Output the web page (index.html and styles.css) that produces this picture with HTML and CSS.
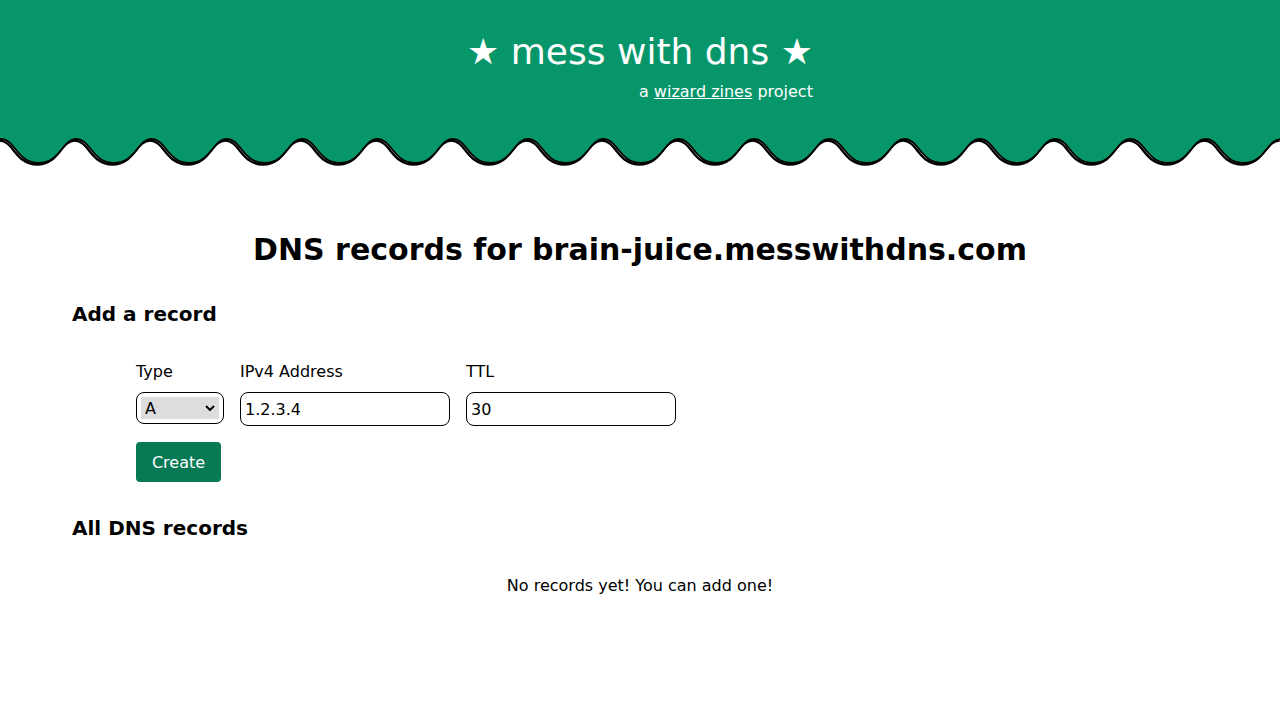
FILE: index.html
```html
<!DOCTYPE html>
<html lang="en">
<head>
<meta charset="utf-8">
<title>mess with dns</title>
<link rel="stylesheet" href="styles.css">
</head>
<body>
<header class="site-header">
  <div class="brand">
    <h1 class="brand-title">★ mess with dns ★</h1>
    <p class="brand-sub">a <a href="#">wizard zines</a> project</p>
  </div>
</header>
<svg class="wave" viewBox="0 0 1280 30" preserveAspectRatio="none" aria-hidden="true">
  <defs>
    <path id="wave-line" d="M-74.3,2 c14,0 16,24 37.65,24 c21.65,0 23.65,-24 37.65,-24 c14,0 16,24 37.65,24 c21.65,0 23.65,-24 37.65,-24 c14,0 16,24 37.65,24 c21.65,0 23.65,-24 37.65,-24 c14,0 16,24 37.65,24 c21.65,0 23.65,-24 37.65,-24 c14,0 16,24 37.65,24 c21.65,0 23.65,-24 37.65,-24 c14,0 16,24 37.65,24 c21.65,0 23.65,-24 37.65,-24 c14,0 16,24 37.65,24 c21.65,0 23.65,-24 37.65,-24 c14,0 16,24 37.65,24 c21.65,0 23.65,-24 37.65,-24 c14,0 16,24 37.65,24 c21.65,0 23.65,-24 37.65,-24 c14,0 16,24 37.65,24 c21.65,0 23.65,-24 37.65,-24 c14,0 16,24 37.65,24 c21.65,0 23.65,-24 37.65,-24 c14,0 16,24 37.65,24 c21.65,0 23.65,-24 37.65,-24 c14,0 16,24 37.65,24 c21.65,0 23.65,-24 37.65,-24 c14,0 16,24 37.65,24 c21.65,0 23.65,-24 37.65,-24 c14,0 16,24 37.65,24 c21.65,0 23.65,-24 37.65,-24 c14,0 16,24 37.65,24 c21.65,0 23.65,-24 37.65,-24 c14,0 16,24 37.65,24 c21.65,0 23.65,-24 37.65,-24 c14,0 16,24 37.65,24 c21.65,0 23.65,-24 37.65,-24"/>
  </defs>
  <use href="#wave-line" transform="translate(-1.5,1.6)" fill="none" stroke="#000" stroke-width="2.4"/>
  <path fill="#07966a" d="M-74.3,-1 L-74.3,2 c14,0 16,24 37.65,24 c21.65,0 23.65,-24 37.65,-24 c14,0 16,24 37.65,24 c21.65,0 23.65,-24 37.65,-24 c14,0 16,24 37.65,24 c21.65,0 23.65,-24 37.65,-24 c14,0 16,24 37.65,24 c21.65,0 23.65,-24 37.65,-24 c14,0 16,24 37.65,24 c21.65,0 23.65,-24 37.65,-24 c14,0 16,24 37.65,24 c21.65,0 23.65,-24 37.65,-24 c14,0 16,24 37.65,24 c21.65,0 23.65,-24 37.65,-24 c14,0 16,24 37.65,24 c21.65,0 23.65,-24 37.65,-24 c14,0 16,24 37.65,24 c21.65,0 23.65,-24 37.65,-24 c14,0 16,24 37.65,24 c21.65,0 23.65,-24 37.65,-24 c14,0 16,24 37.65,24 c21.65,0 23.65,-24 37.65,-24 c14,0 16,24 37.65,24 c21.65,0 23.65,-24 37.65,-24 c14,0 16,24 37.65,24 c21.65,0 23.65,-24 37.65,-24 c14,0 16,24 37.65,24 c21.65,0 23.65,-24 37.65,-24 c14,0 16,24 37.65,24 c21.65,0 23.65,-24 37.65,-24 c14,0 16,24 37.65,24 c21.65,0 23.65,-24 37.65,-24 c14,0 16,24 37.65,24 c21.65,0 23.65,-24 37.65,-24 c14,0 16,24 37.65,24 c21.65,0 23.65,-24 37.65,-24 L1284,2 L1284,-1 Z"/>
  <use href="#wave-line" fill="none" stroke="#000" stroke-width="1.8"/>
</svg>

<main class="content">
  <h1 class="page-title">DNS records for brain-juice.messwithdns.com</h1>

  <h3 class="section-title">Add a record</h3>
  <form class="record-form" onsubmit="return false">
    <div class="fields">
      <label class="field">
        <span class="field-label">Type</span>
        <span class="select-wrap">
          <select class="type-select">
            <option>A</option>
            <option>AAAA</option>
            <option>CNAME</option>
            <option>MX</option>
            <option>TXT</option>
          </select>
          <svg class="chevron" viewBox="0 0 10 6" aria-hidden="true"><path d="M1,1 L5,5 L9,1" fill="none" stroke="#000" stroke-width="2"/></svg>
        </span>
      </label>
      <label class="field">
        <span class="field-label">IPv4 Address</span>
        <input class="text-input" type="text" value="1.2.3.4">
      </label>
      <label class="field">
        <span class="field-label">TTL</span>
        <input class="text-input" type="text" value="30">
      </label>
    </div>
    <button class="create-btn" type="submit">Create</button>
  </form>

  <h3 class="section-title section-title--list">All DNS records</h3>
  <p class="empty">No records yet! You can add one!</p>
</main>
</body>
</html>
```

FILE: styles.css
```css
* { box-sizing: border-box; }

html, body {
  margin: 0;
  padding: 0;
  background: #fff;
}

body {
  font-family: "DejaVu Sans", "Liberation Sans", sans-serif;
  font-size: 16px;
  color: #000;
}

.site-header {
  background: #07966a;
  color: #fff;
  text-align: center;
  padding: 31px 0 37px;
}

.brand {
  display: inline-block;
  text-align: right;
}

.brand-title {
  margin: 0 0 9px;
  font-size: 36px;
  font-weight: normal;
  line-height: 42px;
}

.brand-sub {
  margin: 0;
  font-size: 16px;
  line-height: 19px;
}

.brand-sub a {
  color: #fff;
}

.wave {
  display: block;
  width: 100%;
  height: 30px;
  margin-top: -1px;
  overflow: visible;
}

.content {
  padding: 65px 72px 40px;
}

.page-title {
  margin: 0;
  text-align: center;
  font-size: 30px;
  line-height: 35px;
  font-weight: bold;
}

.section-title {
  margin: 36px 0 0;
  font-size: 20px;
  line-height: 23px;
  font-weight: bold;
}

.section-title--list {
  margin-top: 35px;
}

.record-form {
  margin: 36px 0 0 64px;
}

.fields {
  display: flex;
  gap: 16px;
  align-items: flex-start;
}

.field {
  display: flex;
  flex-direction: column;
  gap: 11px;
}

.field-label {
  line-height: 19px;
}

.select-wrap {
  position: relative;
  display: block;
  width: 88px;
  height: 32px;
  border: 1px solid #000;
  border-radius: 8px;
  padding: 4px;
}

.type-select {
  display: block;
  width: 78px;
  height: 22px;
  appearance: none;
  -webkit-appearance: none;
  border: none;
  border-radius: 0;
  background: #dddddd;
  font-family: inherit;
  font-size: 16px;
  color: #000;
  padding: 0 0 0 4px;
  margin: 0;
}

.chevron {
  position: absolute;
  right: 8px;
  top: 12px;
  width: 10px;
  height: 6px;
  pointer-events: none;
}

.text-input {
  display: block;
  width: 210px;
  height: 34px;
  border: 1px solid #000;
  border-radius: 8px;
  padding: 0 4px;
  font-family: inherit;
  font-size: 16px;
  color: #000;
  background: #fff;
}

.create-btn {
  display: block;
  margin-top: 16px;
  width: 85px;
  height: 40px;
  background: #077a55;
  color: #fff;
  border: none;
  border-radius: 4px;
  font-family: inherit;
  font-size: 16px;
  padding: 0;
}

.empty {
  margin: 36px 0 0;
  text-align: center;
  line-height: 19px;
}
```
